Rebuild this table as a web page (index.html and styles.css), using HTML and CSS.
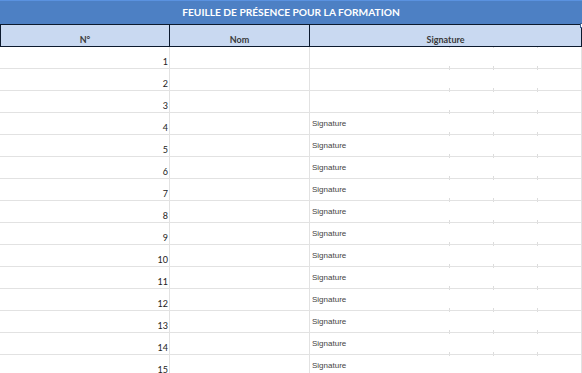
FILE: index.html
```html
<!DOCTYPE html>
<html lang="fr">
<head>
<meta charset="utf-8">
<title>Feuille de présence</title>
<link rel="stylesheet" href="styles.css">
</head>
<body>
<div class="sheet">
  <div class="title">FEUILLE DE PRÉSENCE POUR LA FORMATION<span class="handle"></span></div>
  <div class="head">
    <div class="hc c1">N°</div>
    <div class="hc c2">Nom</div>
    <div class="hc c3">Signature</div>
  </div>
  <div class="row"><div class="num">1</div><div class="nom"></div><div class="sig"></div></div>
  <div class="row"><div class="num">2</div><div class="nom"></div><div class="sig"></div></div>
  <div class="row"><div class="num">3</div><div class="nom"></div><div class="sig"></div></div>
  <div class="row"><div class="num">4</div><div class="nom"></div><div class="sig">Signature</div></div>
  <div class="row"><div class="num">5</div><div class="nom"></div><div class="sig">Signature</div></div>
  <div class="row"><div class="num">6</div><div class="nom"></div><div class="sig">Signature</div></div>
  <div class="row"><div class="num">7</div><div class="nom"></div><div class="sig">Signature</div></div>
  <div class="row"><div class="num">8</div><div class="nom"></div><div class="sig">Signature</div></div>
  <div class="row"><div class="num">9</div><div class="nom"></div><div class="sig">Signature</div></div>
  <div class="row"><div class="num">10</div><div class="nom"></div><div class="sig">Signature</div></div>
  <div class="row"><div class="num">11</div><div class="nom"></div><div class="sig">Signature</div></div>
  <div class="row"><div class="num">12</div><div class="nom"></div><div class="sig">Signature</div></div>
  <div class="row"><div class="num">13</div><div class="nom"></div><div class="sig">Signature</div></div>
  <div class="row"><div class="num">14</div><div class="nom"></div><div class="sig">Signature</div></div>
  <div class="row"><div class="num">15</div><div class="nom"></div><div class="sig">Signature</div></div>
</div>
</body>
</html>
```
FILE: styles.css
```css
html, body {
  margin: 0;
  padding: 0;
  background: #ffffff;
  overflow: hidden;
}
.sheet {
  width: 582px;
  font-family: Lato, "Liberation Sans", sans-serif;
}
.title {
  position: relative;
  height: 23px;
  border-top: 1px solid #5a92e0;
  border-bottom: 1px solid #0c1a2e;
  background: #4d80c4;
  color: #ffffff;
  font-weight: bold;
  font-size: 10.2px;
  line-height: 23px;
  text-align: center;
}
.handle {
  position: absolute;
  right: -3px;
  bottom: -4px;
  width: 5px;
  height: 5px;
  background: #ffffff;
  border: 1px solid #3b5f8f;
  box-sizing: border-box;
}
.head {
  display: grid;
  grid-template-columns: 169px 140px 272px;
  height: 21px;
  border-left: 1px solid #0c1a2e;
  border-bottom: 1px solid #0c1a2e;
  background: #c9d9f1;
}
.hc {
  border-right: 1px solid #0c1a2e;
  display: flex;
  align-items: flex-end;
  justify-content: center;
  padding-bottom: 1px;
  font-size: 9px;
  font-weight: bold;
  color: #3a3a3a;
}
.row {
  display: grid;
  grid-template-columns: 170px 140px 272px;
  height: 22px;
}
.row > div {
  border-bottom: 1px solid #e2e2e2;
  border-right: 1px solid #e2e2e2;
}
.num {
  display: flex;
  align-items: flex-end;
  justify-content: flex-end;
  padding: 0 1px 1px 0;
  font-size: 9px;
  color: #222222;
}
.sig {
  display: flex;
  align-items: center;
  padding: 0 0 0 2px;
  font-family: "Liberation Sans", Arial, sans-serif;
  font-size: 8px;
  color: #444444;
  background-image:
    linear-gradient(#dcdcdc, #dcdcdc),
    linear-gradient(#dcdcdc, #dcdcdc),
    linear-gradient(#dcdcdc, #dcdcdc),
    linear-gradient(#dcdcdc, #dcdcdc),
    linear-gradient(#dcdcdc, #dcdcdc),
    linear-gradient(#dcdcdc, #dcdcdc);
  background-repeat: no-repeat;
  background-size: 1px 2px, 1px 2px, 1px 2px, 1px 1px, 1px 1px, 1px 1px;
  background-position: 139px 100%, 183px 100%, 227px 100%, 139px 0, 183px 0, 227px 0;
}
```
